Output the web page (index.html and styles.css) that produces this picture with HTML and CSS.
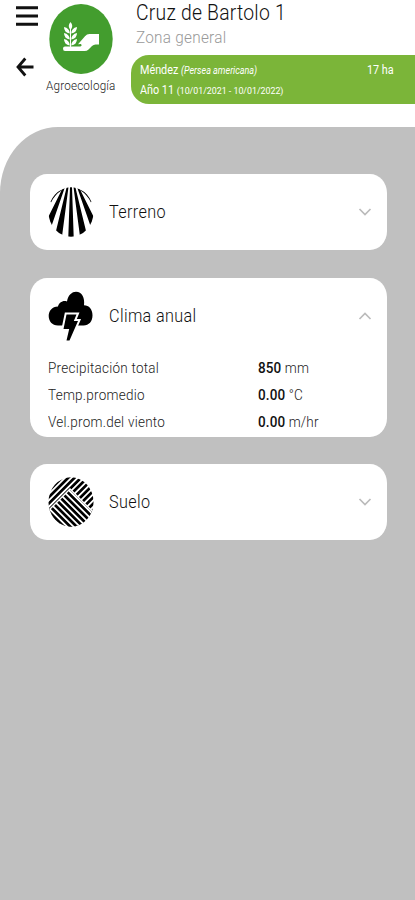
FILE: index.html
```html
<!DOCTYPE html>
<html lang="es">
<head>
<meta charset="utf-8">
<title>Cruz de Bartolo 1</title>
<link rel="stylesheet" href="styles.css">
</head>
<body>
<header class="top">
  <nav class="nav">
    <svg class="menu" width="22" height="20" viewBox="0 0 22 20"><path d="M0 1.7h22M0 10h22M0 18.2h22" stroke="#111" stroke-width="3"/></svg>
    <svg class="back" width="18" height="20" viewBox="0 0 18 20" fill="none" stroke="#111" stroke-width="2.8"><path d="M17.500 10H2M9.300 1.500 2 10l7.300 8.500"/></svg>
  </nav>
  <div class="brand">
    <svg width="64" height="70" viewBox="0 0 64 70">
      <ellipse cx="32" cy="35" rx="31.7" ry="35" fill="#439d2e"/>
      <g fill="#fff">
        <path d="M14 44.500q0-2 2-2h15q2.500-.5 1-2.500l-3 .2 7-8q1.800-2.200 4.500-2.200H50v10.500h-3.500q-2 0-3.500 1.500l-3.500 3.500q-1.500 1.500-4 1.500H16q-2 0-2-2.500z"/>
        <path d="M21.500 18q3.500 4 0 8-3.500-4 0-8zM15 23q5.500 1 5.800 6.500Q15 28.500 15 23zm13 0q-5.500 1-5.800 6.500Q28 28.500 28 23zM15 29q5.500 1 5.800 6.500Q15 34.500 15 29zm13 0q-5.500 1-5.800 6.500Q28 34.500 28 29zM15 35q5.500 1 5.800 6.500Q15 40.500 15 35zm13 0q-5.500 1-5.800 6.500Q28 40.500 28 35z"/>
        <path d="M21 24h1v19h-1z"/>
      </g>
    </svg>
    <span class="brand-name t">Agroecología</span>
  </div>
  <div class="info">
    <h1 class="title t">Cruz de Bartolo 1</h1>
    <p class="zone t">Zona general</p>
    <div class="crop">
      <div class="crop-row"><span class="t">Méndez <i>(Persea americana)</i></span><span class="area t">17 ha</span></div>
      <div class="crop-row"><span class="t">Año 11 <small>(10/01/2021 - 10/01/2022)</small></span></div>
    </div>
  </div>
</header>
<main class="panel">
  <section class="card">
    <div class="head">
      <svg class="icon" viewBox="0 0 46 50">
        <defs><clipPath id="disc"><ellipse cx="23" cy="25" rx="22.500" ry="24.700"/></clipPath></defs>
        <g clip-path="url(#disc)">
          <path d="M22 0h2l1.700 50h-5.400zM18.700 0h1.800l-6.300 48-6.700-2zM27.300 0h-1.800l6.300 48 6.700-2zM15.200 0h1.800L3.500 39-1 32.500zM30.800 0H29l13.500 39 4.500-6.500z"/>
          <path d="M13.500 2.500Q6 7 2.500 15M32.500 2.500Q40 7 43.500 15" fill="none" stroke="#000" stroke-width="1.500"/>
        </g>
      </svg>
      <h2 class="t">Terreno</h2>
      <svg class="chev" viewBox="0 0 14 8"><path d="m1.500 1 5.500 5.500L12.500 1"/></svg>
    </div>
  </section>
  <section class="card open">
    <div class="head">
      <svg class="icon" viewBox="0 0 46 50">
        <path d="M10 34.500C4 34.500.7 30 .7 25S4 15.500 10 15.500c1-4 5-6.500 9-5C20 4 24 .7 28 .7c6 0 9 6 8 13.500 5 0 8.500 4 8.500 10s-3.500 10.300-9 10.300z"/>
        <path class="bolt" d="M18.500 23.500h10l-2.700 6.500h4.200L21.500 49.500h-3l2.700-11.500h-5.700z"/>
      </svg>
      <h2 class="t">Clima anual</h2>
      <svg class="chev" viewBox="0 0 14 8"><path d="M1.500 7 7 1.500 12.500 7"/></svg>
    </div>
    <dl class="data">
      <dt><span class="t">Precipitación total</span></dt><dd><span class="t"><b>850</b> mm</span></dd>
      <dt><span class="t">Temp.promedio</span></dt><dd><span class="t"><b>0.00</b> °C</span></dd>
      <dt><span class="t">Vel.prom.del viento</span></dt><dd><span class="t"><b>0.00</b> m/hr</span></dd>
    </dl>
  </section>
  <section class="card">
    <div class="head">
      <svg class="icon" viewBox="0 0 46 50">
        <defs>
          <pattern id="rise" width="4.500" height="4.500" patternUnits="userSpaceOnUse" patternTransform="rotate(-45)"><path d="M0 0h4.500v2.700H0z"/></pattern>
          <pattern id="fall" width="4.500" height="4.500" patternUnits="userSpaceOnUse" patternTransform="rotate(45)"><path d="M0 0h4.500v2.700H0z"/></pattern>
        </defs>
        <g clip-path="url(#disc)">
          <path d="M0 0h46v50H0z" fill="url(#rise)"/>
          <path d="M-2 35 22 11 61 50H-2z" fill="#fff"/>
          <path d="M-2 37 22 13 59 50H-2z" fill="url(#fall)"/>
        </g>
      </svg>
      <h2 class="t">Suelo</h2>
      <svg class="chev" viewBox="0 0 14 8"><path d="m1.500 1 5.500 5.500L12.500 1"/></svg>
    </div>
  </section>
</main>
</body>
</html>
```
FILE: styles.css
```css
* { box-sizing: border-box; }
body { margin: 0; height: 900px; overflow: hidden; background: #fff; color: #222; font-family: Roboto, sans-serif; font-weight: 300; display: flex; flex-direction: column; }
h1, h2, p, dl, dd { margin: 0; font-weight: inherit; }
svg { display: block; flex: none; }
.t { display: inline-block; white-space: nowrap; transform: scaleX(.9); transform-origin: 0 50%; }
.top { height: 127px; flex: none; display: flex; }
.nav { width: 46px; padding: 6px 0 0 16px; flex: none; }
.back { margin-top: 31px; }
.brand { width: 85px; flex: none; padding: 4px 0 0 3px; }
.brand-name { display: block; margin: 4px 0 0 -3px; font-size: 13px; line-height: 16px; color: #222; letter-spacing: .2px; }
.info { flex: 1; min-width: 0; }
.title { display: block; margin-left: 5px; font-size: 21.5px; line-height: 26px; letter-spacing: .25px; color: #111; }
.zone { display: block; margin-left: 5px; height: 29px; font-size: 17px; line-height: 23px; letter-spacing: .3px; color: #999; }
.crop { height: 49px; padding: 5px 0 0 9px; border-radius: 18px 0 0 18px; background: #7bb539; color: #fff; font-size: 12px; font-weight: 400; }
.crop-row { display: flex; height: 20px; line-height: 20px; }
.crop i { font-size: 10px; }
.crop small { font-size: 9.8px; }
.area { margin-left: auto; margin-right: 18px; }
.panel { flex: 1; padding: 47px 28px 0 30px; background: #c0c0c0; border-radius: 58px 0 0 0 / 66px 0 0 0; display: flex; flex-direction: column; gap: 27.5px; }
.card { height: 76px; background: #fff; border-radius: 17px / 19px; flex: none; }
.open { height: 159px; }
.head { height: 76px; display: flex; align-items: center; padding: 0 15px 0 18px; }
.icon { width: 46px; height: 50px; margin-right: 15px; }
.bolt { stroke: #fff; stroke-width: 4; paint-order: stroke; }
.head h2 { font-size: 18px; line-height: 24px; letter-spacing: .4px; color: #111; }
.chev { width: 14px; height: 8px; margin-left: auto; fill: none; stroke: #bbb; stroke-width: 1.7; }
.data { display: grid; grid-template-columns: 210px 1fr; grid-auto-rows: 27px; padding: 1.500px 0 0 18px; font-size: 15px; line-height: 27px; letter-spacing: .27px; }
.data dd { letter-spacing: .15px; }
b { font-weight: 500; color: #111; }
```
